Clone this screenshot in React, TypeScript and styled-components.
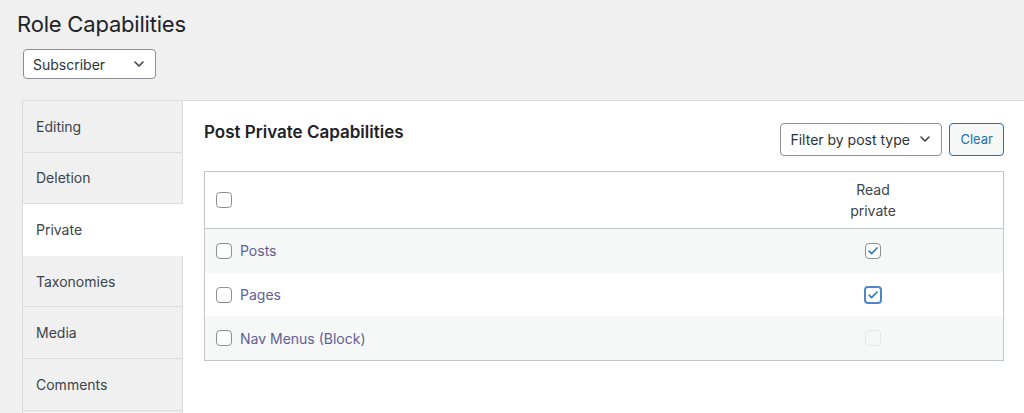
import React from "react";
import styled, { createGlobalStyle, css } from "styled-components";

const GlobalStyle = createGlobalStyle`
  html, body {
    margin: 0;
    padding: 0;
    background: #f0f0f1;
    font-family: Inter, "Liberation Sans", Arial, sans-serif;
    color: #1d2327;
    overflow: hidden;
  }
`;

const Page = styled.div`
  height: 413px;
  display: flex;
  flex-direction: column;
  overflow: hidden;
`;

const Title = styled.h1`
  margin: 0;
  padding: 9px 0 0 17px;
  font-size: 22px;
  letter-spacing: -0.2px;
  font-weight: 400;
  line-height: 30px;
  color: #1d2327;
  flex-shrink: 0;
`;

const SelectBox = styled.div<{ width: number; tall?: boolean }>`
  box-sizing: border-box;
  width: ${({ width }) => width}px;
  height: ${({ tall }) => (tall ? 33 : 30)}px;
  flex-shrink: 0;
  display: flex;
  align-items: center;
  justify-content: space-between;
  padding: 0 9px 0 9px;
  background: #fff;
  border: 1px solid #8c8f94;
  border-radius: 4px;
  font-size: 14px;
  color: #2c3338;
`;

const RoleSelect = styled(SelectBox)`
  margin: 10px 0 0 23px;
`;

const Chevron = () => (
  <svg width="14" height="14" viewBox="0 0 14 14" fill="none">
    <path d="M3 5l4 4 4-4" stroke="#3c434a" strokeWidth="1.6" strokeLinecap="round" strokeLinejoin="round" />
  </svg>
);

const Panel = styled.div`
  margin: 21px 0 0 22px;
  flex: 1;
  min-height: 0;
  display: flex;
  border-top: 1px solid #dcdcde;
`;

const Tabs = styled.ul`
  margin: 0;
  padding: 0;
  list-style: none;
  width: 161px;
  flex-shrink: 0;
  border-left: 1px solid #dcdcde;
  box-sizing: border-box;
`;

const Tab = styled.li<{ active?: boolean }>`
  box-sizing: border-box;
  height: 51.6px;
  display: flex;
  align-items: center;
  padding-left: 13px;
  font-size: 14px;
  color: #3c434a;
  border-bottom: 1px solid #dcdcde;
  border-right: 1px solid #dcdcde;
  background: #f0f0f1;
  ${({ active }) =>
    active &&
    css`
      background: #fff;
      border-right-color: #fff;
      border-bottom-color: #fff;
    `}
`;

const Content = styled.div`
  flex: 1;
  background: #fff;
  padding: 21px 20px 0 21px;
`;

const HeaderRow = styled.div`
  display: flex;
  align-items: center;
  justify-content: space-between;
  height: 34px;
`;

const Heading = styled.h2`
  margin: 0 0 14px;
  font-size: 17px;
  font-weight: 600;
  color: #1d2327;
`;

const Filters = styled.div`
  display: flex;
  gap: 7px;
  align-items: center;
`;

const ClearButton = styled.button`
  box-sizing: border-box;
  height: 33px;
  padding: 0 10px;
  background: #f6f7f7;
  border: 1px solid #2271b1;
  border-radius: 4px;
  color: #2271b1;
  font-family: inherit;
  font-size: 13px;
`;

const Table = styled.div`
  margin-top: 15px;
  border: 1px solid #c3c4c7;
`;

const Row = styled.div<{ head?: boolean; alt?: boolean }>`
  display: grid;
  grid-template-columns: 1fr 100px 80px;
  align-items: center;
  height: ${({ head }) => (head ? 56 : 43.7)}px;
  background: ${({ alt }) => (alt ? "#f6f7f7" : "#fff")};
  border-bottom: ${({ head }) => (head ? "1px solid #c3c4c7" : "none")};
`;

const Label = styled.label`
  display: flex;
  align-items: center;
  gap: 8px;
  padding-left: 11px;
  font-size: 14px;
  color: #625f95;
`;

const ColHead = styled.div`
  text-align: center;
  font-size: 14px;
  line-height: 21px;
  color: #3c434a;
`;

const Cell = styled.div`
  display: flex;
  justify-content: center;
`;

type BoxState = "empty" | "checked" | "focus" | "disabled";

const Box = styled.span<{ state: BoxState }>`
  box-sizing: border-box;
  width: 16px;
  height: 16px;
  border-radius: 4px;
  background: #fff;
  display: inline-flex;
  align-items: center;
  justify-content: center;
  border: 1px solid #8c8f94;
  ${({ state }) =>
    state === "focus" &&
    css`
      width: 18px;
      height: 18px;
      border: 2px solid #4f86c6;
    `}
  ${({ state }) =>
    state === "disabled" &&
    css`
      border-color: #e5e5e7;
      background: #f6f7f7;
    `}
`;

const Check = () => (
  <svg width="12" height="12" viewBox="0 0 12 12" fill="none">
    <path d="M2.2 6.2l2.4 2.4L10 3" stroke="#3582c4" strokeWidth="1.8" strokeLinecap="round" strokeLinejoin="round" />
  </svg>
);

const Checkbox = ({ state = "empty" }: { state?: BoxState }) => (
  <Box state={state}>{state === "checked" || state === "focus" ? <Check /> : null}</Box>
);

const tabs = ["Editing", "Deletion", "Private", "Taxonomies", "Media", "Comments", ""];

const rows: { name: string; state: BoxState }[] = [
  { name: "Posts", state: "checked" },
  { name: "Pages", state: "focus" },
  { name: "Nav Menus (Block)", state: "disabled" },
];

export default function App() {
  return (
    <Page>
      <GlobalStyle />
      <Title>Role Capabilities</Title>
      <RoleSelect width={133}>
        Subscriber
        <Chevron />
      </RoleSelect>
      <Panel>
        <Tabs>
          {tabs.map((t, i) => (
            <Tab key={i} active={t === "Private"}>
              {t}
            </Tab>
          ))}
        </Tabs>
        <Content>
          <HeaderRow>
            <Heading>Post Private Capabilities</Heading>
            <Filters>
              <SelectBox width={162} tall>
                Filter by post type
                <Chevron />
              </SelectBox>
              <ClearButton>Clear</ClearButton>
            </Filters>
          </HeaderRow>
          <Table>
            <Row head>
              <Label>
                <Checkbox />
              </Label>
              <ColHead>
                Read
                <br />
                private
              </ColHead>
              <div />
            </Row>
            {rows.map((r, i) => (
              <Row key={r.name} alt={i % 2 === 0}>
                <Label>
                  <Checkbox />
                  {r.name}
                </Label>
                <Cell>
                  <Checkbox state={r.state} />
                </Cell>
                <div />
              </Row>
            ))}
          </Table>
        </Content>
      </Panel>
    </Page>
  );
}
